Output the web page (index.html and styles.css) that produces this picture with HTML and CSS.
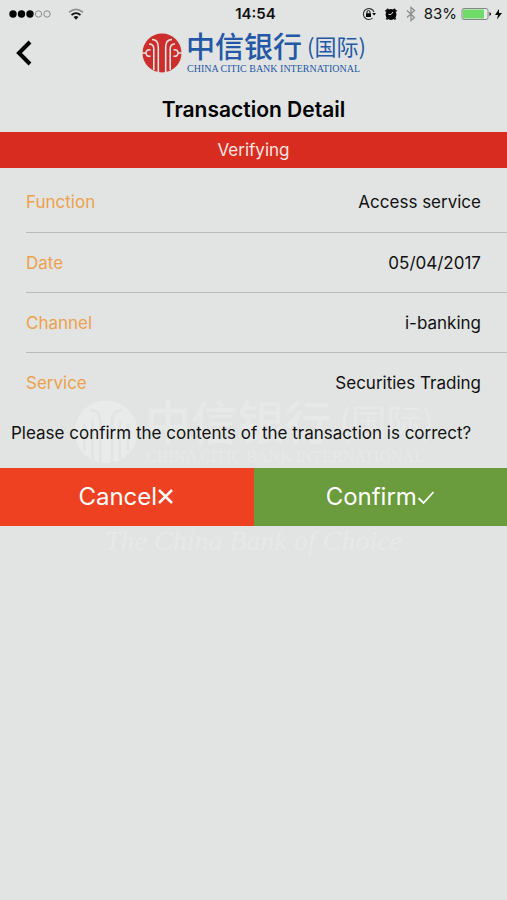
FILE: index.html
```html
<!DOCTYPE html>
<html lang="en">
<head>
<meta charset="utf-8">
<meta name="viewport" content="width=device-width, initial-scale=1">
<title>Transaction Detail</title>
<link rel="stylesheet" href="styles.css">
</head>
<body>
<div class="watermark" aria-hidden="true">
  <svg class="watermark-logo" viewBox="0 0 224 42">
    <circle class="logo-disc" cx="20" cy="21" r="19.5"/>
    <path class="logo-cut" d="M10 7.500C14 7.500 16.300 9.500 16.300 15V41M30 7.500C26 7.500 23.700 9.500 23.700 15V41M11.500 14V38M28.500 14V38M6.500 16V33M33.500 16V33"/>
    <text class="logo-name" x="44" y="26">中信银行</text>
    <text class="logo-name logo-region" x="165" y="23">(国际)</text>
    <text class="logo-english" x="45" y="40">CHINA CITIC BANK INTERNATIONAL</text>
  </svg>
  <p class="watermark-slogan">The China Bank of Choice</p>
</div>

<div class="status">
  <div class="status-side">
    <svg width="44" height="12" viewBox="0 0 44 12"><g><circle cx="5" cy="6" r="3.700"/><circle cx="13.500" cy="6" r="3.700"/><circle cx="22" cy="6" r="3.700"/></g><g fill="none" stroke="#8b8d8c"><circle cx="30.500" cy="6" r="3.200"/><circle cx="39" cy="6" r="3.200"/></g></svg>
    <svg class="wifi" width="16" height="12" viewBox="0 0 16 12" fill="none" stroke-width="1.800"><path d="M1 4.300Q8-1.500 15 4.300" stroke="#929493"/><path d="M3.500 7Q8 3.300 12.500 7" stroke="#111"/><path d="M5.500 9Q8 7 10.500 9L8 11.700Z" fill="#111"/></svg>
  </div>
  <time class="clock">14:54</time>
  <div class="status-side status-right">
    <svg width="14" height="14" viewBox="0 0 14 14"><path d="M12 5A5.500 5.500 0 1 0 10.500 11.200" fill="none" stroke="#333" stroke-width="1.100"/><path d="M10.200 6H14L12.100 8.600ZM4 6.300H9V10H4Z"/><path d="M5 6.500V5A1.500 1.500 0 0 1 8 5V6.500" fill="none" stroke="#111"/></svg>
    <svg width="14" height="14" viewBox="0 0 14 14"><circle cx="7" cy="7.500" r="5.400"/><path d="M1.500 4.500 4.500 2M12.500 4.500 9.500 2M3.500 11 2.500 12.500M10.500 11 11.500 12.500" stroke="#111" stroke-width="2"/><path d="M4.500 7.500H7L9 5" stroke="#e2e5e3" fill="none"/></svg>
    <svg width="10" height="16" viewBox="0 0 10 16"><path d="M1 4.500 8.500 11.500 5 14.500V1.500L8.500 4.500 1 11.500" fill="none" stroke="#8b8d8c" stroke-width="1.300"/></svg>
    <span class="charge">83%</span>
    <svg class="battery" width="42" height="14" viewBox="0 0 42 14"><rect x="1" y="1.500" width="26" height="11" rx="2" fill="#e8ebe9" stroke="#858886"/><path d="M2 2.500H23V11.500H2Z" fill="#6fdb69"/><path d="M28.500 5Q31.500 7 28.500 9Z"/><path d="M38 2 34 8H37L36 12.500 41 6H38Z"/></svg>
  </div>
</div>

<header class="header">
  <button class="back" type="button" aria-label="Back"><svg width="18" height="28" viewBox="0 0 18 28"><path d="M15 3 4 14 15 25" fill="none" stroke="#000" stroke-width="4"/></svg></button>
  <svg class="brand" viewBox="0 0 224 42" role="img" aria-label="China CITIC Bank International">
    <circle class="logo-disc" cx="20" cy="21" r="19.5"/>
    <path class="logo-cut" d="M10 7.500C14 7.500 16.300 9.500 16.300 15V41M30 7.500C26 7.500 23.700 9.500 23.700 15V41M7 12C10 12 11.800 13.500 11.800 17V38M33 12C30 12 28.200 13.500 28.200 17V38M8.500 18C5.500 17 4 19 4 21S5.500 25 8.500 24M0 21H4M31.500 18C34.500 17 36 19 36 21S34.500 25 31.500 24M40 21H36"/>
    <text class="logo-name" x="44" y="26">中信银行</text>
    <text class="logo-name logo-region" x="165" y="23">(国际)</text>
    <text class="logo-english" x="45" y="40">CHINA CITIC BANK INTERNATIONAL</text>
  </svg>
</header>

<main>
  <h1 class="title">Transaction Detail</h1>
  <p class="banner">Verifying</p>
  <dl class="details">
    <div class="row"><dt>Function</dt><dd>Access service</dd></div>
    <div class="row"><dt>Date</dt><dd>05/04/2017</dd></div>
    <div class="row"><dt>Channel</dt><dd>i-banking</dd></div>
    <div class="row"><dt>Service</dt><dd>Securities Trading</dd></div>
  </dl>
  <p class="question">Please confirm the contents of the transaction is correct?</p>
  <div class="actions">
    <button class="action cancel" type="button">Cancel<svg width="18" height="18" viewBox="0 0 18 18"><path d="M2 2 15 15M15 2 2 15" fill="none" stroke="#fff" stroke-width="2.500"/></svg></button>
    <button class="action confirm" type="button">Confirm<svg width="18" height="18" viewBox="0 0 18 18"><path d="M1.500 10 6.500 15 16.500 4" fill="none" stroke="#fff" stroke-width="1.800"/></svg></button>
  </div>
</main>
</body>
</html>
```

FILE: styles.css
```css
* {
  box-sizing: border-box;
}

body {
  position: relative;
  min-height: 100vh;
  margin: 0;
  background: #e1e4e3;
  color: #111;
  font-family: Inter, "Liberation Sans", sans-serif;
  font-size: 17px;
  line-height: 20px;
}

svg {
  display: block;
  flex: none;
}

/* Bank logo */
.logo-disc {
  fill: var(--logo-mark);
}

.logo-cut {
  fill: none;
  stroke: #e1e4e3;
  stroke-width: 1.6px;
}

.logo-name {
  fill: var(--logo-text);
  font-family: "Noto Sans CJK SC", sans-serif;
  font-size: 29px;
  font-weight: 500;
}

.logo-region {
  font-size: 22px;
  font-weight: 400;
}

.logo-english {
  fill: var(--logo-text);
  font-family: "Liberation Serif", serif;
  font-size: 10px;
}

/* Watermark behind the content */
.watermark {
  --logo-mark: #e9ebea;
  --logo-text: #e7e9e8;
  position: absolute;
  inset: 398px 0 auto;
  z-index: -1;
}

.watermark-logo {
  width: 71%;
  margin: 0 auto;
}

.watermark-slogan {
  margin: 60px 0 0;
  color: #e7e9e8;
  font: italic 28px/32px "Liberation Serif", serif;
  text-align: center;
}

/* Status bar */
.status {
  display: grid;
  grid-template-columns: 1fr auto 1fr;
  align-items: center;
  height: 27px;
  padding: 0 4px 0 8px;
  font-size: 15px;
}

.status-side {
  display: flex;
  align-items: center;
  gap: 8px;
}

.status-right {
  justify-content: flex-end;
}

.wifi {
  margin-left: 8px;
}

.battery {
  margin-left: -4px;
}

.clock {
  font-weight: 600;
}

/* Header */
.header {
  display: grid;
  grid-template-columns: 48px 1fr 48px;
  align-items: center;
  height: 52px;
}

.back {
  display: flex;
  justify-content: center;
  padding: 8px 0;
  border: 0;
  background: none;
}

.brand {
  --logo-mark: #cc2e2b;
  --logo-text: #2458a6;
  width: 224px;
  justify-self: center;
}

.title {
  margin: 0;
  padding: 18px 0 10px;
  color: #000;
  font-size: 21px;
  font-weight: 600;
  line-height: 25px;
  text-align: center;
}

.banner {
  margin: 0;
  padding: 8px 0;
  background: #d72c1f;
  color: #fbe5e1;
  text-align: center;
}

.details {
  margin: 0;
  padding: 4px 0 0 26px;
}

.row {
  display: flex;
  align-items: center;
  justify-content: space-between;
  height: 60px;
  padding-right: 26px;
}

.row + .row {
  border-top: 1px solid #b9bcbb;
}

dt {
  color: #eda14c;
}

dd {
  margin: 0;
}

.question {
  margin: 0;
  padding: 11px 11px 25px;
}

.actions {
  display: grid;
  grid-template-columns: 1fr 1fr;
}

.action {
  display: flex;
  align-items: center;
  justify-content: center;
  height: 58px;
  padding: 0;
  border: 0;
  color: #fff;
  font: 400 24px/28px Inter, "Liberation Sans", sans-serif;
}

.cancel {
  background: #ee4122;
}

.confirm {
  background: #6a9b3c;
}
```
